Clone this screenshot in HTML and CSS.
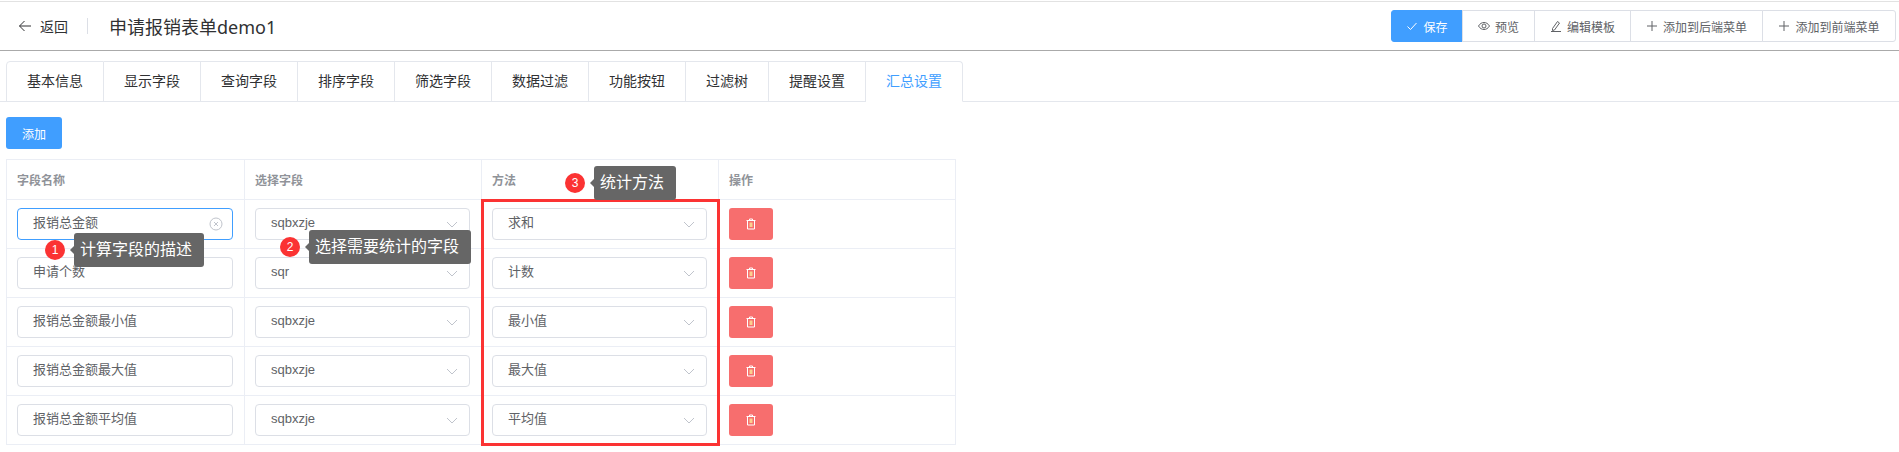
FILE: index.html
```html
<!DOCTYPE html>
<html lang="zh-CN">

<head>
  <meta charset="UTF-8" />
  <title>申请报销表单demo1</title>
  <link rel="stylesheet" href="styles.css">
</head>

<body>
  <!-- 顶部栏 -->
  <header class="topbar">
    <a class="back" href="#">
      <svg class="back-icon" viewBox="0 0 14 14"><path d="M13 7H1.500M6.500 2 1.500 7l5 5" /></svg>
      <span>返回</span>
    </a>
    <span class="divider"></span>
    <h1 class="title">申请报销表单demo1</h1>
    <div class="btn-group">
      <button class="tool primary">
        <svg class="ico" viewBox="0 0 12 12"><path d="M1.500 6.500 4.500 9.500 10.500 3" /></svg>保存
      </button>
      <button class="tool">
        <svg class="ico" viewBox="0 0 12 12"><path d="M.5 6C2 3.500 4 2.500 6 2.500S10 3.500 11.500 6C10 8.500 8 9.500 6 9.500S2 8.500 .5 6Z" /><circle cx="6" cy="6" r="2" /></svg>预览
      </button>
      <button class="tool">
        <svg class="ico" viewBox="0 0 12 12"><path d="M2.500 8.500 7.500 1.500 9.500 3 4.500 10 2.500 10.500ZM1 11.500H11" /></svg>编辑模板
      </button>
      <button class="tool">
        <svg class="ico plus" viewBox="0 0 12 12"><path d="M6 1V11M1 6H11" /></svg>添加到后端菜单
      </button>
      <button class="tool">
        <svg class="ico plus" viewBox="0 0 12 12"><path d="M6 1V11M1 6H11" /></svg>添加到前端菜单
      </button>
    </div>
  </header>

  <!-- 选项卡 -->
  <nav class="tabs">
    <a class="tab" href="#">基本信息</a>
    <a class="tab" href="#">显示字段</a>
    <a class="tab" href="#">查询字段</a>
    <a class="tab" href="#">排序字段</a>
    <a class="tab" href="#">筛选字段</a>
    <a class="tab" href="#">数据过滤</a>
    <a class="tab" href="#">功能按钮</a>
    <a class="tab short" href="#">过滤树</a>
    <a class="tab" href="#">提醒设置</a>
    <a class="tab active" href="#">汇总设置</a>
  </nav>

  <main class="content">
    <button class="add-btn">添加</button>

    <div class="table-wrap">
      <table class="grid">
        <thead>
          <tr>
            <th>字段名称</th>
            <th>选择字段</th>
            <th>方法</th>
            <th>操作</th>
          </tr>
        </thead>
        <tbody>
          <tr>
            <td>
              <div class="field focus">报销总金额
                <svg class="clear" viewBox="0 0 14 14"><circle cx="7" cy="7" r="6" /><path d="M5 5 9 9M9 5 5 9" /></svg>
              </div>
            </td>
            <td><div class="field">sqbxzje<svg class="arrow" viewBox="0 0 12 7"><path d="M1 1 6 6 11 1" /></svg></div></td>
            <td><div class="field">求和<svg class="arrow" viewBox="0 0 12 7"><path d="M1 1 6 6 11 1" /></svg></div></td>
            <td><button class="del"><svg class="trash" viewBox="0 0 12 12"><path d="M1.500 2.500H10.500M4.500 2.500V1H7.500V2.500M2.500 2.500V11H9.500V2.500" /><rect class="trash-in" x="4.500" y="4.500" width="3" height="4.500" /></svg></button></td>
          </tr>
          <tr>
            <td><div class="field">申请个数</div></td>
            <td><div class="field">sqr<svg class="arrow" viewBox="0 0 12 7"><path d="M1 1 6 6 11 1" /></svg></div></td>
            <td><div class="field">计数<svg class="arrow" viewBox="0 0 12 7"><path d="M1 1 6 6 11 1" /></svg></div></td>
            <td><button class="del"><svg class="trash" viewBox="0 0 12 12"><path d="M1.500 2.500H10.500M4.500 2.500V1H7.500V2.500M2.500 2.500V11H9.500V2.500" /><rect class="trash-in" x="4.500" y="4.500" width="3" height="4.500" /></svg></button></td>
          </tr>
          <tr>
            <td><div class="field">报销总金额最小值</div></td>
            <td><div class="field">sqbxzje<svg class="arrow" viewBox="0 0 12 7"><path d="M1 1 6 6 11 1" /></svg></div></td>
            <td><div class="field">最小值<svg class="arrow" viewBox="0 0 12 7"><path d="M1 1 6 6 11 1" /></svg></div></td>
            <td><button class="del"><svg class="trash" viewBox="0 0 12 12"><path d="M1.500 2.500H10.500M4.500 2.500V1H7.500V2.500M2.500 2.500V11H9.500V2.500" /><rect class="trash-in" x="4.500" y="4.500" width="3" height="4.500" /></svg></button></td>
          </tr>
          <tr>
            <td><div class="field">报销总金额最大值</div></td>
            <td><div class="field">sqbxzje<svg class="arrow" viewBox="0 0 12 7"><path d="M1 1 6 6 11 1" /></svg></div></td>
            <td><div class="field">最大值<svg class="arrow" viewBox="0 0 12 7"><path d="M1 1 6 6 11 1" /></svg></div></td>
            <td><button class="del"><svg class="trash" viewBox="0 0 12 12"><path d="M1.500 2.500H10.500M4.500 2.500V1H7.500V2.500M2.500 2.500V11H9.500V2.500" /><rect class="trash-in" x="4.500" y="4.500" width="3" height="4.500" /></svg></button></td>
          </tr>
          <tr>
            <td><div class="field">报销总金额平均值</div></td>
            <td><div class="field">sqbxzje<svg class="arrow" viewBox="0 0 12 7"><path d="M1 1 6 6 11 1" /></svg></div></td>
            <td><div class="field">平均值<svg class="arrow" viewBox="0 0 12 7"><path d="M1 1 6 6 11 1" /></svg></div></td>
            <td><button class="del"><svg class="trash" viewBox="0 0 12 12"><path d="M1.500 2.500H10.500M4.500 2.500V1H7.500V2.500M2.500 2.500V11H9.500V2.500" /><rect class="trash-in" x="4.500" y="4.500" width="3" height="4.500" /></svg></button></td>
          </tr>
        </tbody>
      </table>

      <!-- 标注 -->
      <div class="mark-box"></div>
      <div class="note note-1"><span class="badge">1</span><span class="tip">计算字段的描述</span></div>
      <div class="note note-2"><span class="badge">2</span><span class="tip">选择需要统计的字段</span></div>
      <div class="note note-3"><span class="badge">3</span><span class="tip">统计方法</span></div>
    </div>
  </main>
</body>

</html>
```

FILE: styles.css
```css
/* 초기화 */
html,
body,
h1 {
  margin: 0;
  padding: 0;
}

body {
  height: 452px;
  overflow: hidden;
  background-color: #fff;
  color: #303133;
  font-family: "Liberation Sans", "Noto Sans CJK SC", sans-serif;
  font-size: 14px;
}

/* 상단바 */
.topbar {
  display: flex;
  align-items: center;
  height: 48px;
  margin-top: 1px;
  padding: 0 3px 0 18px;
  border-top: 1px solid #e2e2e2;
  border-bottom: 1px solid #aaa;
}

.back {
  display: flex;
  align-items: center;
  gap: 8px;
  color: #303133;
  text-decoration: none;
}

.back-icon {
  width: 14px;
  height: 14px;
  fill: none;
  stroke: #303133;
  stroke-width: 1;
}

.divider {
  width: 1px;
  height: 16px;
  margin: 0 21px 0 19px;
  background-color: #dcdfe6;
}

.title {
  font-family: "Noto Sans", "Noto Sans CJK SC", sans-serif;
  font-size: 18px;
  font-weight: 400;
}

/* 버튼 그룹 */
.btn-group {
  display: flex;
  margin-left: auto;
}

.tool {
  display: flex;
  align-items: center;
  justify-content: center;
  gap: 5px;
  height: 32px;
  padding: 0 10px;
  margin-left: -1px;
  border: 1px solid #dcdfe6;
  background-color: #fff;
  color: #606266;
  font-family: inherit;
  font-size: 12px;
}

.tool:nth-child(1) {
  width: 72px;
  margin-left: 0;
  border-radius: 3px 0 0 3px;
}

.tool:nth-child(2) {
  width: 73px;
}

.tool:nth-child(3) {
  width: 97px;
}

.tool:nth-child(4) {
  width: 133px;
}

.tool:nth-child(5) {
  width: 134px;
  border-radius: 0 3px 3px 0;
}

.tool.primary {
  border-color: #409eff;
  background-color: #409eff;
  color: #fff;
}

.ico {
  flex-shrink: 0;
  width: 12px;
  height: 12px;
  fill: none;
  stroke: currentColor;
  stroke-width: 1;
}

/* 탭 */
.tabs {
  display: flex;
  height: 41px;
  margin-top: 10px;
  padding-left: 6px;
  border-bottom: 1px solid #e4e7ed;
  box-sizing: border-box;
}

.tab {
  width: 97px;
  height: 41px;
  box-sizing: border-box;
  border: 1px solid #e4e7ed;
  border-left-width: 0;
  color: #303133;
  font-size: 14px;
  line-height: 38px;
  text-align: center;
  text-decoration: none;
}

.tab:first-child {
  width: 98px;
  border-left-width: 1px;
  border-top-left-radius: 4px;
}

.tab.short {
  width: 83px;
}

.tab.active {
  border-bottom-color: #fff;
  border-top-right-radius: 4px;
  color: #409eff;
}

/* 본문 */
.content {
  padding: 15px 6px 0;
}

.add-btn {
  display: block;
  width: 56px;
  height: 32px;
  border: 0;
  border-radius: 3px;
  background-color: #409eff;
  color: #fff;
  font-family: inherit;
  font-size: 12px;
}

.table-wrap {
  position: relative;
  width: 950px;
  margin-top: 10px;
}

.grid {
  width: 950px;
  table-layout: fixed;
  border-collapse: collapse;
}

.grid th,
.grid td {
  box-sizing: border-box;
  padding: 0 11px 0 10px;
  border: 1px solid #ebeef5;
  text-align: left;
}

/* 칸 너비 */
.grid th:nth-child(1) {
  width: 238px;
}

.grid th:nth-child(2),
.grid th:nth-child(3) {
  width: 237px;
}

.grid th {
  height: 40px;
  color: #909399;
  font-size: 12px;
  font-weight: 700;
}

.grid td {
  height: 49px;
}

.field {
  position: relative;
  height: 32px;
  box-sizing: border-box;
  padding-left: 15px;
  border: 1px solid #dcdfe6;
  border-radius: 4px;
  color: #606266;
  font-size: 13px;
  line-height: 28px;
}

.field.focus {
  border-color: #409eff;
}

.arrow {
  position: absolute;
  top: 12px;
  right: 11px;
  width: 12px;
  height: 7px;
  fill: none;
  stroke: #c0c4cc;
  stroke-width: 1;
}

.clear {
  position: absolute;
  top: 8px;
  right: 9px;
  width: 14px;
  height: 14px;
  fill: none;
  stroke: #c0c4cc;
  stroke-width: 1;
}

.del {
  display: flex;
  align-items: center;
  justify-content: center;
  width: 44px;
  height: 32px;
  padding: 0;
  border: 0;
  border-radius: 3px;
  background-color: #f76e6e;
}

.trash {
  width: 12px;
  height: 12px;
  fill: none;
  stroke: #fff;
  stroke-width: 1;
}

.trash-in {
  fill: #fbd08f;
  stroke: none;
}

/* 빨간 표시 박스 */
.mark-box {
  position: absolute;
  top: 40px;
  left: 475px;
  width: 239px;
  height: 247px;
  box-sizing: border-box;
  border: 3px solid #fb3333;
}

/* 말풍선 주석 */
.note {
  position: absolute;
  display: flex;
  align-items: center;
  gap: 9px;
}

.note-1 {
  top: 74px;
  left: 39px;
}

.note-2 {
  top: 71px;
  left: 274px;
}

.note-3 {
  top: 7px;
  left: 559px;
}

.badge {
  width: 20px;
  height: 20px;
  border-radius: 50%;
  background-color: #fb3333;
  color: #fff;
  font-size: 12px;
  line-height: 20px;
  text-align: center;
}

.tip {
  position: relative;
  height: 34px;
  padding: 0 12px 0 6px;
  border-radius: 3px;
  background-color: #666;
  color: #fff;
  font-size: 16px;
  line-height: 34px;
  white-space: nowrap;
}

.tip::before {
  content: '';
  position: absolute;
  top: 13px;
  left: -4px;
  border-top: 4px solid transparent;
  border-bottom: 4px solid transparent;
  border-right: 4px solid #666;
}
```
